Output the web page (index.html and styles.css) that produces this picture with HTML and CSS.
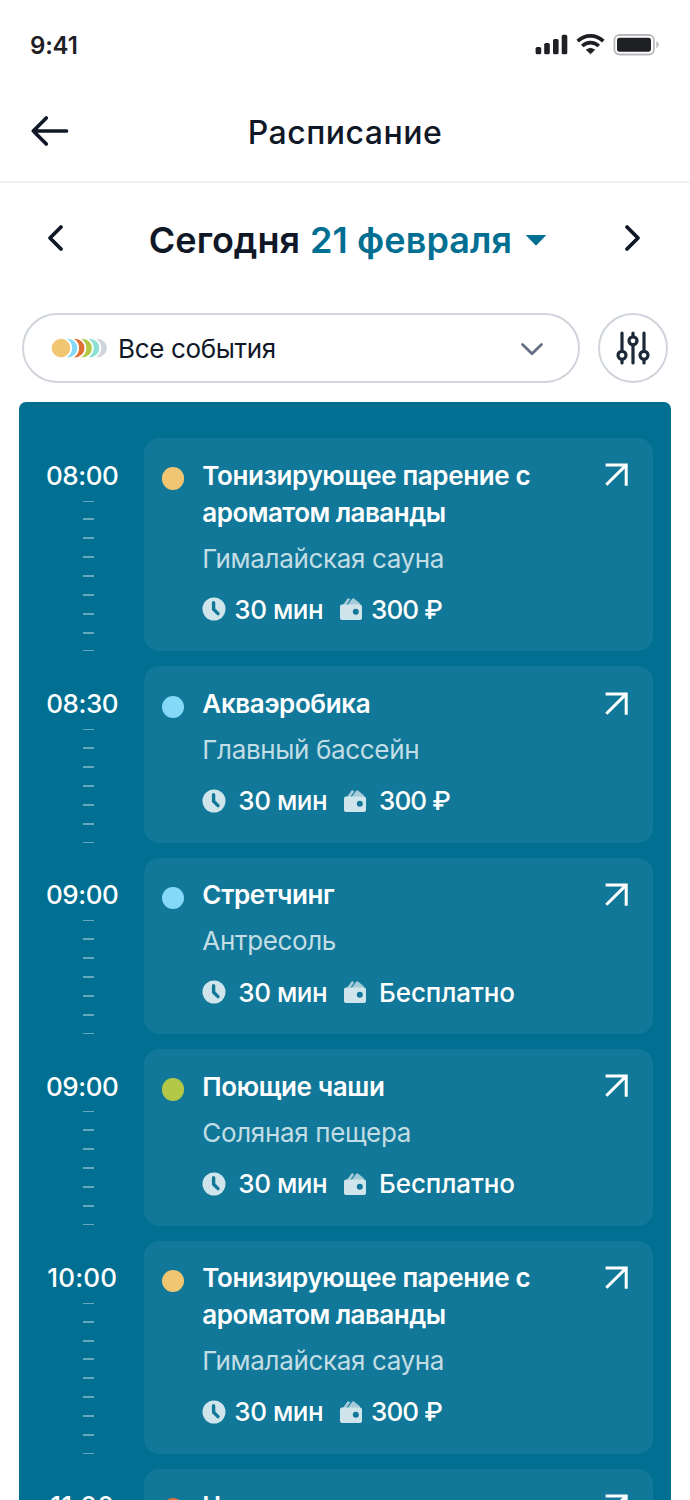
FILE: index.html
```html
<!DOCTYPE html>
<html lang="ru">
<head>
    <meta charset="UTF-8">
    <meta name="viewport" content="width=device-width, initial-scale=1.0">
    <title>Расписание</title>
    <link rel="stylesheet" href="styles.css">
</head>
<body>
    <!-- общие иконки -->
    <svg class="sprite" width="0" height="0">
        <symbol id="i-open" viewBox="0 0 24 24">
            <path d="M.6 2H21.2V22.8M20.8 2.4L1.3 21.8" fill="none" stroke="#fff" stroke-width="3"/>
        </symbol>
        <symbol id="i-clock" viewBox="0 0 24 24">
            <circle cx="12" cy="12" r="11.5" fill="#d0e4eb"/>
            <path d="M11.6 5.8V12.2L16 16.6" fill="none" stroke="#117899" stroke-width="3.4" stroke-linecap="round" stroke-linejoin="round"/>
        </symbol>
        <symbol id="i-wallet" viewBox="0 0 24 24">
            <path d="M3.5 8.5L8 2.2Q9 .7 10.4 1.8L11.2 2.4L7 8.5ZM8.2 8.5L13 2Q14 .8 15.3 1.8L20.5 6Q21.5 7 21 8.5Z" fill="#a5cbd8"/>
            <path d="M1 9.5Q1 7.6 3 7.6H21Q23 7.6 23 9.5V21Q23 23 21 23H3Q1 23 1 21Z" fill="#d0e4eb"/>
            <circle cx="16.8" cy="14.7" r="3" fill="#117899"/>
        </symbol>
    </svg>

    <div class="statusbar">
        <span class="clock">9:41</span>
        <svg width="124" height="24" viewBox="0 0 124 24">
            <g fill="#1f2024">
                <rect x="0.6" y="13" width="5.6" height="7.3" rx="1.6"/>
                <rect x="9.2" y="9" width="5.6" height="11.3" rx="1.6"/>
                <rect x="18" y="5" width="5.6" height="15.3" rx="1.6"/>
                <rect x="26.7" y="0.8" width="5.6" height="19.5" rx="1.6"/>
                <path d="M51.4 15.8Q55.5 12.8 59.6 15.8L55.5 19.8Z" stroke="#1f2024" stroke-linejoin="round"/>
            </g>
            <g fill="none" stroke="#1f2024" stroke-width="3.7">
                <path d="M42.7 7.1C50 .2 61 .2 68.3 7.1"/>
                <path d="M47.2 12C52 7.6 59 7.6 63.8 12"/>
            </g>
            <rect x="79.4" y="1" width="39.5" height="19.5" rx="5" fill="none" stroke="#b9b9bb" stroke-width="1.8"/>
            <rect x="82" y="3.7" width="34" height="14" rx="2.6" fill="#1f2024"/>
            <path d="M121.4 7.3Q123.7 8.2 123.7 10.6T121.4 14Z" fill="#b9b9bb"/>
        </svg>
    </div>

    <header class="header">
        <svg class="back" width="40" height="34" viewBox="0 0 40 34">
            <path d="M36.5 17H3.5M16.3 4L3.3 17L16.3 30" fill="none" stroke="#101828" stroke-width="3.7" stroke-linecap="round" stroke-linejoin="round"/>
        </svg>
        <h1>Расписание</h1>
    </header>

    <div class="datebar">
        <svg width="18" height="28" viewBox="0 0 18 28">
            <path d="M15 3L4 14L15 25" fill="none" stroke="#101828" stroke-width="3.8" stroke-linecap="round" stroke-linejoin="round"/>
        </svg>
        <div class="date">
            <span class="today">Сегодня</span>
            <span class="day">21 февраля</span>
            <svg width="22" height="12" viewBox="0 0 22 12">
                <path d="M.7 1H21.3L12 10.8Q11 11.8 10 10.8Z" fill="#006f92"/>
            </svg>
        </div>
        <svg width="18" height="28" viewBox="0 0 18 28">
            <path d="M3 3L14 14L3 25" fill="none" stroke="#101828" stroke-width="3.8" stroke-linecap="round" stroke-linejoin="round"/>
        </svg>
    </div>

    <div class="filters">
        <div class="select">
            <svg width="58" height="22" viewBox="0 0 58 22" stroke="#fff" stroke-width="1.8">
                <circle cx="46.5" cy="11" r="10.2" fill="#d0d5dd"/>
                <circle cx="39" cy="11" r="10.2" fill="#8be0d3"/>
                <circle cx="31.6" cy="11" r="10.2" fill="#b3c846"/>
                <circle cx="24.2" cy="11" r="10.2" fill="#e07033"/>
                <circle cx="17" cy="11" r="10.2" fill="#84d9f8"/>
                <circle cx="10" cy="11" r="10.2" fill="#f1c672"/>
            </svg>
            <span>Все события</span>
            <svg class="arrow" width="24" height="16" viewBox="0 0 24 16">
                <path d="M2.5 4.4L12 13.7L21.5 4.4" fill="none" stroke="#667085" stroke-width="2.8" stroke-linecap="round" stroke-linejoin="round"/>
            </svg>
        </div>
        <div class="settings">
            <svg width="36" height="36" viewBox="0 0 36 36" fill="none" stroke="#1d2939" stroke-width="3.2" stroke-linecap="round">
                <path d="M7 3V21.5M7 30.5V33M18 3V6.5M18 15.5V33M29 3V21.5M29 30.5V33"/>
                <circle cx="7" cy="25.3" r="4"/>
                <circle cx="18" cy="10.8" r="4"/>
                <circle cx="29" cy="25.3" r="4"/>
            </svg>
        </div>
    </div>

    <main class="schedule">
        <div class="row">
            <div class="when">
                <span class="time">08:00</span>
                <div class="ticks"><i></i><i></i><i></i><i></i><i></i><i></i><i></i><i></i><i></i></div>
            </div>
            <article class="card">
                <span class="dot yellow"></span>
                <div class="info">
                    <h2>Тонизирующее парение с<br><span class="line2">ароматом лаванды</span></h2>
                    <p>Гималайская сауна</p>
                    <div class="meta tight">
                        <svg><use href="#i-clock"/></svg><span class="dur">30 мин</span>
                        <svg><use href="#i-wallet"/></svg><span class="price">300 ₽</span>
                    </div>
                </div>
                <svg class="open"><use href="#i-open"/></svg>
            </article>
        </div>
        <div class="row">
            <div class="when">
                <span class="time">08:30</span>
                <div class="ticks"><i></i><i></i><i></i><i></i><i></i><i></i><i></i></div>
            </div>
            <article class="card">
                <span class="dot blue"></span>
                <div class="info">
                    <h2>Акваэробика</h2>
                    <p>Главный бассейн</p>
                    <div class="meta">
                        <svg><use href="#i-clock"/></svg><span class="dur">30 мин</span>
                        <svg><use href="#i-wallet"/></svg><span class="price">300 ₽</span>
                    </div>
                </div>
                <svg class="open"><use href="#i-open"/></svg>
            </article>
        </div>
        <div class="row">
            <div class="when">
                <span class="time">09:00</span>
                <div class="ticks"><i></i><i></i><i></i><i></i><i></i><i></i><i></i></div>
            </div>
            <article class="card">
                <span class="dot blue"></span>
                <div class="info">
                    <h2>Стретчинг</h2>
                    <p>Антресоль</p>
                    <div class="meta">
                        <svg><use href="#i-clock"/></svg><span class="dur">30 мин</span>
                        <svg><use href="#i-wallet"/></svg><span class="price free">Бесплатно</span>
                    </div>
                </div>
                <svg class="open"><use href="#i-open"/></svg>
            </article>
        </div>
        <div class="row">
            <div class="when">
                <span class="time">09:00</span>
                <div class="ticks"><i></i><i></i><i></i><i></i><i></i><i></i><i></i></div>
            </div>
            <article class="card">
                <span class="dot green"></span>
                <div class="info">
                    <h2>Поющие чаши</h2>
                    <p>Соляная пещера</p>
                    <div class="meta">
                        <svg><use href="#i-clock"/></svg><span class="dur">30 мин</span>
                        <svg><use href="#i-wallet"/></svg><span class="price free">Бесплатно</span>
                    </div>
                </div>
                <svg class="open"><use href="#i-open"/></svg>
            </article>
        </div>
        <div class="row">
            <div class="when">
                <span class="time wide">10:00</span>
                <div class="ticks"><i></i><i></i><i></i><i></i><i></i><i></i><i></i><i></i><i></i></div>
            </div>
            <article class="card">
                <span class="dot yellow"></span>
                <div class="info">
                    <h2>Тонизирующее парение с<br><span class="line2">ароматом лаванды</span></h2>
                    <p>Гималайская сауна</p>
                    <div class="meta tight">
                        <svg><use href="#i-clock"/></svg><span class="dur">30 мин</span>
                        <svg><use href="#i-wallet"/></svg><span class="price">300 ₽</span>
                    </div>
                </div>
                <svg class="open"><use href="#i-open"/></svg>
            </article>
        </div>
        <div class="row">
            <div class="when">
                <span class="time wide">11:00</span>
            </div>
            <article class="card">
                <span class="dot orange"></span>
                <div class="info">
                    <h2>Ц</h2>
                </div>
                <svg class="open"><use href="#i-open"/></svg>
            </article>
        </div>
    </main>
</body>
</html>
```
FILE: styles.css
```css
* {
    box-sizing: border-box;
}
body {
    margin: 0;
    height: 1500px;
    overflow: hidden;
    display: flex;
    flex-direction: column;
    background: #fff;
    color: #101828;
    font-family: Inter, "Noto Sans", sans-serif;
}
svg {
    display: block;
    flex: none;
}
h1, h2, p {
    margin: 0;
}
.sprite {
    position: absolute;
}
.statusbar {
    flex: none;
    height: 81px;
    padding: 33px 31px 0 30px;
    display: flex;
    justify-content: space-between;
}
.clock {
    font-size: 24px;
    line-height: 26px;
    font-weight: 600;
    letter-spacing: -0.2px;
    color: #1f2024;
}
.statusbar svg {
    margin-top: 1px;
}
.header {
    flex: none;
    height: 101.5px;
    border-bottom: 2px solid #f1f2f4;
    padding: 0 30px;
    display: grid;
    grid-template-columns: 40px 1fr 40px;
    align-items: center;
}
.header h1 {
    font-size: 32px;
    line-height: 40px;
    font-weight: 500;
    letter-spacing: 0.5px;
    text-align: center;
    padding-top: 4px;
}
.datebar {
    flex: none;
    height: 130.5px;
    padding: 0 48px 19.5px 46px;
    display: flex;
    align-items: center;
    justify-content: space-between;
}
.date {
    display: flex;
    align-items: center;
    font-size: 36px;
    line-height: 44px;
    font-weight: 600;
    padding: 3px 0 0 8px;
}
.day {
    color: #006f92;
    margin: 0 13px 0 10px;
    letter-spacing: 0.1px;
}
.filters {
    flex: none;
    height: 88.5px;
    padding: 0 22px;
    display: flex;
    gap: 18px;
}
.select, .settings {
    height: 70px;
    border: 2px solid #d0d5dd;
    border-radius: 35px;
    display: flex;
    align-items: center;
}
.select {
    flex: 1;
    padding: 0 34px 0 27px;
    font-size: 26px;
    letter-spacing: -0.35px;
}
.select span {
    margin-left: 9px;
}
.arrow {
    margin-left: auto;
}
.settings {
    width: 70px;
    justify-content: center;
}
.schedule {
    flex: 1;
    margin: 0 18.6px;
    padding: 36.8px 18.4px 0 0;
    border-radius: 7px 7px 0 0;
    background: #006f92;
    color: #fff;
    display: flex;
    flex-direction: column;
    gap: 15px;
    overflow: hidden;
}
.row {
    flex: none;
    display: flex;
}
.when {
    width: 125.2px;
    padding-top: 19.5px;
    display: flex;
    flex-direction: column;
    align-items: center;
}
.time {
    font-size: 26px;
    line-height: 36.8px;
    font-weight: 500;
    letter-spacing: -0.4px;
    padding-left: 2px;
}
.wide {
    letter-spacing: 0.2px;
}
.ticks {
    flex: 1;
    margin: 6px 0 0 14px;
    display: flex;
    flex-direction: column;
    justify-content: space-between;
}
.ticks i {
    width: 11px;
    height: 2px;
    background: #66a9be;
}
.ticks i:first-child, .ticks i:last-child {
    height: 1px;
}
.card {
    flex: 1;
    padding: 19.6px 24.5px 23.6px 18px;
    border-radius: 15px;
    background: #117899;
    display: flex;
    align-items: flex-start;
}
.dot {
    flex: none;
    width: 22.4px;
    height: 22.4px;
    margin: 9.6px 18.2px 0 0;
    border-radius: 50%;
}
.yellow { background: #f1c672; }
.blue { background: #84d9f8; }
.green { background: #b3c846; }
.orange { background: #e07033; }
.info {
    flex: 1;
    white-space: nowrap;
}
.info h2 {
    font-size: 26px;
    line-height: 36.8px;
    font-weight: 600;
    letter-spacing: -0.38px;
}
.line2 {
    letter-spacing: -0.53px;
}
.info p {
    margin-top: 9.2px;
    font-size: 26px;
    line-height: 36.8px;
    letter-spacing: -0.35px;
    color: #c3dde5;
}
.meta {
    margin-top: 13.6px;
    height: 36.8px;
    display: flex;
    align-items: center;
    font-size: 26px;
    font-weight: 500;
}
.meta svg {
    width: 24px;
    height: 24px;
}
.dur {
    margin: 0 16px 0 12px;
    letter-spacing: -0.5px;
}
.price {
    margin-left: 12px;
    letter-spacing: -0.9px;
}
.free {
    letter-spacing: -0.1px;
}
.tight .dur, .tight .price {
    margin-left: 8px;
}
.open {
    width: 24px;
    height: 24px;
    margin-top: 5.6px;
}
```
